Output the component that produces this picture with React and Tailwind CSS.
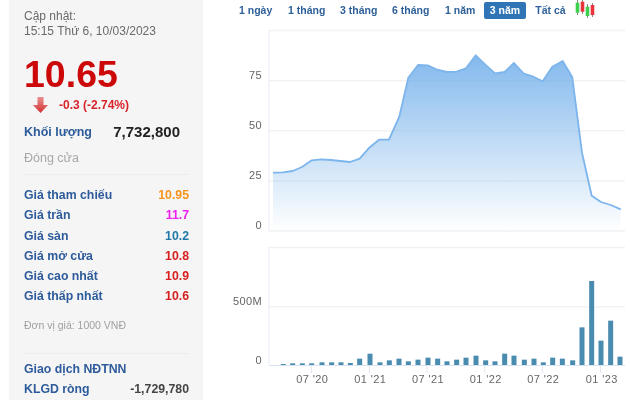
const ff = { fontFamily: '"Liberation Sans", Arial, sans-serif' };

const rows = [
  ["Giá tham chiếu", "10.95", "text-[#f7941d]"],
  ["Giá trần", "11.7", "text-[#f01ff0]"],
  ["Giá sàn", "10.2", "text-[#1f78a8]"],
  ["Giá mở cửa", "10.8", "text-[#d81e1e]"],
  ["Giá cao nhất", "10.9", "text-[#d81e1e]"],
  ["Giá thấp nhất", "10.6", "text-[#d81e1e]"],
];
const tabs = [
  ["1 ngày", "w-[33px] mr-[16px]"],
  ["1 tháng", "w-[36px] mr-[16px]"],
  ["3 tháng", "w-[37px] mr-[15px]"],
  ["6 tháng", "w-[37px] mr-[16px]"],
  ["1 năm", "w-[30px] mr-[9px]"],
];

const line = [[273,172.7],[283,172.3],[292.7,171],[302,167],[311.7,160.3],[321,159.3],[330.7,160],[340.3,161],[350,162],[359.7,158.7],[369.3,147.7],[379,139.7],[389,139.7],[399.3,116.7],[408.3,77.7],[418,65],[427.7,65.3],[437.3,69.7],[447,72],[456.7,71.7],[466,68.3],[475.7,55.3],[485.3,64.7],[495,73.3],[504.7,72],[514,63],[523.7,73.7],[533.3,76.7],[542.7,81.3],[552.3,66.7],[562.7,61],[572.3,77.3],[582,152.7],[591.7,195.7],[601,202],[610.7,205],[620.7,209.3]];
const linePts = line.map((p) => p.join(",")).join(" ");
const OX = 220;

const barX = [190,218,247,275,306,335,363,391,419,450,480,508,537,565,594,624,653,681,710,738,768,797,825,854,882,913,942,970,998,1027,1058,1086,1115,1143,1172,1200];
const barT = [342,340,340,340,337,337,337,339,326,311,337,331,326,334,329,323,326,334,329,323,317,331,334,311,317,329,326,337,323,326,331,232,93,272,212,320];
const ticks = [[311.3,"07 '20"],[369.3,"01 '21"],[427,"07 '21"],[484.7,"01 '22"],[542.3,"07 '22"],[600.7,"01 '23"]];

function Candles() {
  return (
    <svg width="20" height="18" viewBox="0 0 20 18" className="shrink-0 mb-[3px]">
      <path d="M2.500 0v15M7.500 0v14M12.500 4v14M17.500 3v14" stroke="#888" strokeWidth="1" />
      <rect x="0.700" y="2.700" width="3.600" height="10" fill="#3fcf4f" />
      <rect x="5.700" y="1.700" width="3.600" height="10" fill="#e8343a" />
      <rect x="10.700" y="6.700" width="3.600" height="9.300" fill="#3fcf4f" />
      <rect x="15.700" y="5" width="3.600" height="10" fill="#e8343a" />
    </svg>
  );
}

export default function App() {
  return (
    <div style={ff} className="flex w-[630px] h-[400px] overflow-hidden bg-white blur-[0.35px]">
      <aside className="ml-[9px] w-[194px] h-full shrink-0 bg-[#f5f5f5] pl-[15px] pr-[14px] pt-[9px]">
        <div className="text-[12px] leading-[15px] text-[#6a6a6a]">
          <div>Cập nhật:</div>
          <div>15:15 Thứ 6, 10/03/2023</div>
        </div>
        <div className="mt-[13px] text-[37.5px] leading-[44px] font-bold text-[#cc0808]">10.65</div>
        <div className="flex items-center h-[16px] mt-[1px] ml-[9px]">
          <svg width="15" height="16" viewBox="0 0 15 16" className="shrink-0">
            <defs>
              <linearGradient id="ar" x1="0" y1="0" x2="0" y2="1">
                <stop offset="0" stopColor="#e89090" />
                <stop offset="1" stopColor="#d32f2f" />
              </linearGradient>
            </defs>
            <path d="M4.500 0h6v8H15L7.500 16 0 8h4.500z" fill="url(#ar)" />
          </svg>
          <span className="ml-[11px] text-[12px] font-bold text-[#d9232a]">-0.3 (-2.74%)</span>
        </div>
        <div className="flex items-center justify-between h-[20px] mt-[9px] pr-[9px]">
          <span className="text-[12.5px] font-bold text-[#2d5b9b]">Khối lượng</span>
          <span className="text-[15px] font-bold text-[#222222]">7,732,800</span>
        </div>
        <div className="mt-[6px] text-[12.5px] leading-[20px] text-[#a8a8a8]">Đóng cửa</div>
        <div className="mt-[6px] h-px bg-[#ececec]" />
        <div className="mt-[10px] flex flex-col">
          {rows.map(([k, v, c]) => (
            <div key={k} className="flex items-center justify-between h-[20.3px] text-[12.3px] font-bold">
              <span className="text-[#2d5b9b]">{k}</span>
              <span className={c}>{v}</span>
            </div>
          ))}
        </div>
        <div className="mt-[11px] text-[10.5px] leading-[14px] text-[#a0a0a0]">Đơn vị giá: 1000 VNĐ</div>
        <div className="mt-[21px] h-px bg-[#ececec]" />
        <div className="mt-[5px] h-[20px] flex items-center text-[12.3px] font-bold text-[#2d5b9b]">Giao dịch NĐTNN</div>
        <div className="h-[20px] flex items-center justify-between text-[12.3px] font-bold">
          <span className="text-[#2d5b9b]">KLGD ròng</span>
          <span className="text-[#444444]">-1,729,780</span>
        </div>
      </aside>

      <main className="flex-1 min-w-0 flex flex-col">
        <nav className="h-[21px] pl-[36px] flex items-center text-[10.5px] font-bold text-[#2f6199] whitespace-nowrap">
          {tabs.map(([t, w]) => (
            <span key={t} className={`${w} text-center`}>{t}</span>
          ))}
          <span className="w-[42px] h-[17px] mr-[9px] rounded-[2px] bg-[#2f75b5] text-white flex items-center justify-center">3 năm</span>
          <span className="w-[31px] mr-[9px] text-center">Tất cả</span>
          <Candles />
        </nav>
        <svg width={427} height={379} viewBox={`${OX - 17} 21 427 379`} className="block">
          <defs>
            <linearGradient id="area" x1="0" y1="55" x2="0" y2="231" gradientUnits="userSpaceOnUse">
              <stop offset="0" stopColor="#7cb5ec" stopOpacity="0.95" />
              <stop offset="1" stopColor="#7cb5ec" stopOpacity="0" />
            </linearGradient>
          </defs>
          <g stroke="#f2f2f2" strokeWidth="1.500">
            <path d="M269 30.500H625M269 80.700H625M269 130.700H625M269 181H625M269 231H625" />
            <path d="M269 247.500H625M269 306.700H625" />
          </g>
          <path d="M269 30V231M269 247V365" stroke="#e6eefa" strokeWidth="1" fill="none" />
          <polygon points={`273,231 ${linePts} 620.700,231`} fill="url(#area)" />
          <polyline points={linePts} fill="none" stroke="#7cb5ec" strokeWidth="1.800" strokeLinejoin="round" />
          <path d="M269 365.500H625" stroke="#d9e3f2" strokeWidth="1" />
          {barX.map((x, i) => {
            const top = 250 + barT[i] / 3;
            return <rect key={i} x={220 + x / 3 - 2.5} y={top} width="5" height={365 - top} fill="#4a8bb0" />;
          })}
          {ticks.map(([x]) => (
            <path key={x} d={`M${x} 366V373`} stroke="#dfe6f2" strokeWidth="1" />
          ))}
          <g fill="#666666" fontSize="11" letterSpacing="0.4" textAnchor="end">
            <text x="262" y="79">75</text>
            <text x="262" y="129">50</text>
            <text x="262" y="179">25</text>
            <text x="262" y="229">0</text>
            <text x="262" y="305">500M</text>
            <text x="262" y="364">0</text>
          </g>
          <g fill="#666666" fontSize="11" letterSpacing="0.4" textAnchor="middle">
            {ticks.map(([x, t]) => (
              <text key={t} x={x + 1} y="383">{t}</text>
            ))}
          </g>
        </svg>
      </main>
    </div>
  );
}
